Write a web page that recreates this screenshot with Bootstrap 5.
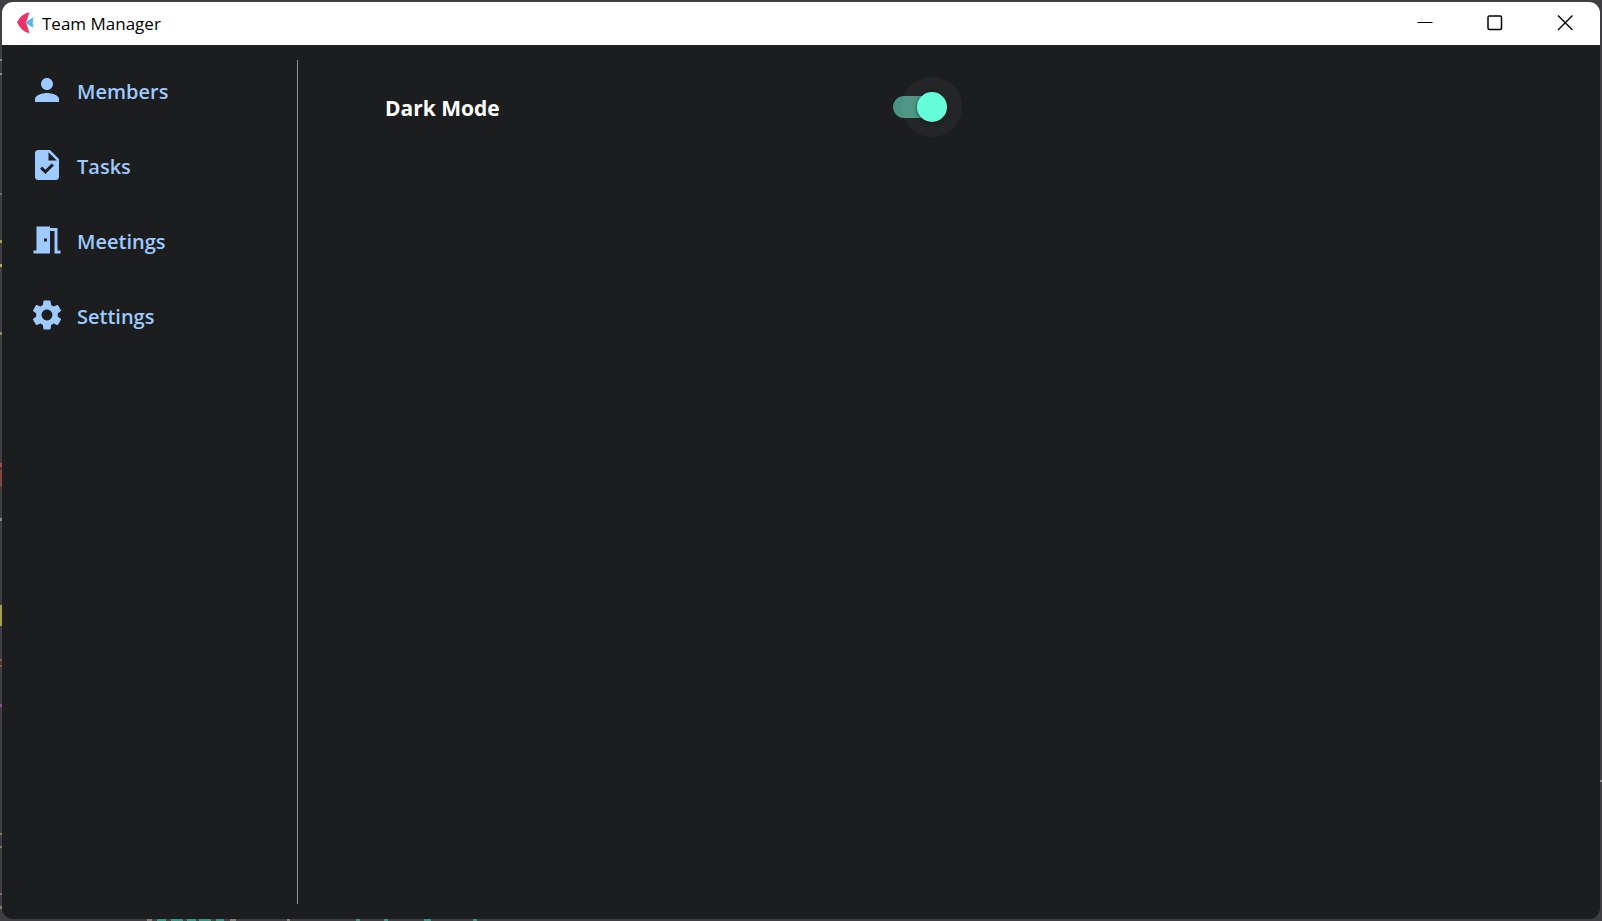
<!DOCTYPE html>
<html lang="en" data-bs-theme="dark">
<head>
<meta charset="utf-8">
<meta name="viewport" content="width=device-width, initial-scale=1">
<title>Team Manager</title>
<link href="https://cdn.jsdelivr.net/npm/bootstrap@5.3.0/dist/css/bootstrap.min.css" rel="stylesheet">
<style>
  body { background: #403f44; font-family: "Open Sans", "Noto Sans", sans-serif; }
  /* desktop behind the window: slivers of an editor show at the left and bottom edges */
  .desktop {
    padding: 2px;
    background:
      linear-gradient(180deg, transparent 59px, #8d8d90 59px 61px, transparent 61px 73px, #8d8d90 73px 75px, transparent 75px 193px, #6c6c70 193px 195px, transparent 195px 240px, #a39c55 240px 243px, transparent 243px 264px, #b5a955 264px 267px, transparent 267px 332px, #8f8c5c 332px 335px, transparent 335px 463px, #a5503f 463px 467px, transparent 467px 470px, #7c4840 470px 487px, transparent 487px 518px, #87898f 518px 521px, transparent 521px 605px, #a9a04f 605px 626px, transparent 626px 659px, #a5503f 659px 661px, transparent 661px 665px, #a5503f 665px 667px, transparent 667px 704px, #8e4a97 704px 707px, transparent 707px 833px, #8a7d70 833px 835px, transparent 835px 846px, #8a7d70 846px 848px, transparent 848px 893px, #8a6f68 893px 895px, transparent 895px 906px, #8a7d70 906px 909px, transparent 909px) left top / 2px 100% no-repeat,
      linear-gradient(90deg, transparent 147px, #85807a 147px 152px, transparent 152px 157px, #3c9683 157px 166px, transparent 166px 171px, #3c9683 171px 183px, transparent 183px 187px, #3c9683 187px 196px, transparent 196px 199px, #3c9683 199px 211px, transparent 211px 216px, #3c9683 216px 224px, transparent 224px 230px, #85807a 230px 236px, transparent 236px 287px, #85807a 287px 290px, transparent 290px 356px, #3c9683 356px 360px, transparent 360px 384px, #3c9683 384px 388px, transparent 388px 424px, #3c9683 424px 431px, transparent 431px 473px, #3c9683 473px 477px, transparent 477px) left bottom / 100% 2px no-repeat,
      linear-gradient(180deg, transparent 780px, #8d8d90 780px 782px, transparent 782px) right top / 2px 100% no-repeat;
  }
  .app-window { background: #1c1d1e; border-radius: 11px; }
  .title-bar { background: #fff; color: #000; height: 43px; padding-left: 15px; }
  .title-text { font-size: 17px; line-height: 24px; }
  .caption-btn { width: 70px; height: 43px; border: 0; padding: 0 0 2px; background: transparent; color: #000; }
  .caption-btn:hover { background: #e9e9e9; }
  .side-nav { width: 296px; border-right: 1px solid #8e9099; margin: 15px 0; padding-left: 27px; gap: 15px; }
  .side-link { color: #9ecaff; font-size: 20px; line-height: 30px; font-weight: 600; height: 60px; gap: 12px; }
  .side-link span { padding-top: 3px; }
  .side-link:hover { color: #c5dfff; }
  .setting-row { padding: 31px 0 0 87px; }
  .setting-label { width: 41.8%; padding-top: 2px; color: #fff; font-size: 21px; line-height: 60px; font-weight: 700; }
  .dark-switch { appearance: none; position: relative; width: 51px; height: 22px; margin: 0; border-radius: 11px; background: #499481; }
  .dark-switch::before { content: ""; position: absolute; top: -4px; right: -3px; width: 30px; height: 30px; border-radius: 50%; background: #64ffda; box-shadow: 0 1px 4px rgba(0,0,0,.5), 0 0 0 15px rgba(255,255,255,.04); }
  .dark-switch:not(:checked)::before { right: 24px; background: #bdbdbd; }
</style>
</head>
<body>
<div class="desktop vh-100 d-flex">
  <div class="app-window flex-grow-1 d-flex flex-column overflow-hidden">
    <header class="title-bar d-flex align-items-center">
      <svg width="17" height="24" viewBox="0 0 17 24" aria-hidden="true"><path fill="#ee3167" d="M12.500 0Q4 2 0 10.500Q4 19 12.500 21.500Q11 16 9 10.500Q11 5 12.500 0Z"/><path fill="#5bb7e8" d="M8 10.500Q12 8 16.500 5Q15 10.500 16.500 16Q12 13.500 8 10.500Z"/></svg>
      <span class="title-text ms-2 me-auto">Team Manager</span>
      <button type="button" class="caption-btn d-flex align-items-center justify-content-center" aria-label="Minimize">
        <svg width="16" height="16" viewBox="0 0 16 16" fill="none" stroke="currentColor"><path d="M.5 7.500h15"/></svg>
      </button>
      <button type="button" class="caption-btn d-flex align-items-center justify-content-center" aria-label="Maximize">
        <svg width="16" height="16" viewBox="0 0 16 16" fill="none" stroke="currentColor" stroke-width="1.500"><rect x="1" y="1" width="13.500" height="13.500" rx="1.500"/></svg>
      </button>
      <button type="button" class="caption-btn d-flex align-items-center justify-content-center" aria-label="Close">
        <svg width="16" height="16" viewBox="0 0 16 16" fill="none" stroke="currentColor" stroke-width="1.400"><path d="M1 .5l14.500 14.500M15.500 .5L1 15"/></svg>
      </button>
    </header>
    <div class="d-flex flex-grow-1">
      <nav class="side-nav d-flex flex-column flex-shrink-0" aria-label="Sections">
        <a href="#members" class="side-link d-flex align-items-center text-decoration-none">
          <svg width="36" height="36" viewBox="0 0 24 24" fill="currentColor" aria-hidden="true"><path d="M12 12c2.210 0 4-1.790 4-4s-1.790-4-4-4-4 1.790-4 4 1.790 4 4 4zm0 2c-2.670 0-8 1.340-8 4v2h16v-2c0-2.660-5.330-4-8-4z"/></svg>
          <span>Members</span>
        </a>
        <a href="#tasks" class="side-link d-flex align-items-center text-decoration-none">
          <svg width="36" height="36" viewBox="0 0 24 24" fill="currentColor" aria-hidden="true"><path d="M14 2H6c-1.100 0-1.990.9-1.990 2L4 20c0 1.100.89 2 1.990 2H18c1.100 0 2-.9 2-2V8l-6-6zm-3.060 16L7.400 14.460l1.410-1.410 2.120 2.120 4.240-4.240 1.410 1.410L10.940 18zM13 9V3.500L18.500 9H13z"/></svg>
          <span>Tasks</span>
        </a>
        <a href="#meetings" class="side-link d-flex align-items-center text-decoration-none">
          <svg width="36" height="36" viewBox="0 0 24 24" fill="currentColor" aria-hidden="true"><path d="M14 6v15H3v-2h2V3h9v1h5v15h2v2h-4V6h-3zm-4 5v2h2v-2h-2z"/></svg>
          <span>Meetings</span>
        </a>
        <a href="#settings" class="side-link d-flex align-items-center text-decoration-none">
          <svg width="36" height="36" viewBox="0 0 24 24" fill="currentColor" aria-hidden="true"><path d="M19.140 12.940c.04-.3.060-.61.060-.94 0-.32-.02-.64-.07-.94l2.030-1.580c.18-.14.230-.41.120-.61l-1.920-3.320c-.12-.22-.37-.29-.59-.22l-2.390.96c-.5-.38-1.030-.7-1.620-.94l-.36-2.540c-.04-.24-.24-.41-.48-.41h-3.840c-.24 0-.43.170-.47.410l-.36 2.540c-.59.240-1.130.570-1.620.940l-2.390-.96c-.22-.08-.47 0-.59.220L2.740 8.870c-.12.210-.08.470.120.610l2.030 1.580c-.05.3-.09.630-.09.940s.02.640.070.940l-2.030 1.580c-.18.140-.23.410-.12.610l1.920 3.320c.12.220.37.290.59.220l2.390-.96c.5.380 1.030.7 1.620.94l.36 2.540c.05.240.24.410.48.410h3.840c.24 0 .44-.17.470-.41l.36-2.540c.59-.24 1.130-.56 1.620-.94l2.390.96c.22.080.47 0 .59-.22l1.920-3.320c.12-.22.070-.47-.12-.61l-2.010-1.580zM12 15.600c-1.980 0-3.600-1.620-3.600-3.600s1.620-3.600 3.600-3.600 3.600 1.620 3.600 3.600-1.620 3.600-3.600 3.600z"/></svg>
          <span>Settings</span>
        </a>
      </nav>
      <main class="flex-grow-1">
        <div class="setting-row d-flex align-items-center">
          <label for="darkMode" class="setting-label">Dark Mode</label>
          <input type="checkbox" role="switch" id="darkMode" class="dark-switch" checked>
        </div>
      </main>
    </div>
  </div>
</div>
<script src="https://cdn.jsdelivr.net/npm/bootstrap@5.3.0/dist/js/bootstrap.bundle.min.js"></script>
</body>
</html>
